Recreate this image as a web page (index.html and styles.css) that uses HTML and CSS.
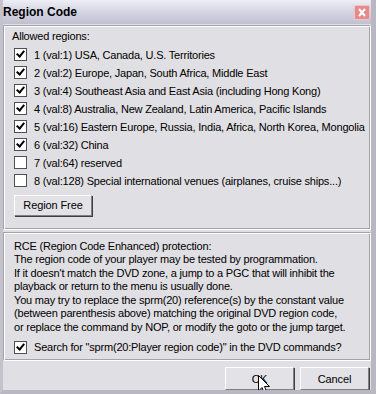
FILE: index.html
```html
<!DOCTYPE html>
<html lang="en">
<head>
    <meta charset="UTF-8">
    <title>Region Code</title>
    <link rel="stylesheet" href="styles.css">
</head>
<body>

    <div class="window">
        <div class="titlebar">
            <span class="title">Region Code</span>
            <span class="close">
                <svg width="14" height="13" viewBox="0 0 14 13">
                    <path d="M4 3 L10 10 M10 3 L4 10" stroke="#fff" stroke-width="2" fill="none"/>
                </svg>
            </span>
        </div>

        <div class="panel regions">
            <div class="label">Allowed regions:</div>
            <div class="row"><span class="check on"></span>1 (val:1) USA, Canada, U.S. Territories</div>
            <div class="row"><span class="check on"></span>2 (val:2) Europe, Japan, South Africa, Middle East</div>
            <div class="row"><span class="check on"></span>3 (val:4) Southeast Asia and East Asia (including Hong Kong)</div>
            <div class="row"><span class="check on"></span>4 (val:8) Australia, New Zealand, Latin America, Pacific Islands</div>
            <div class="row"><span class="check on"></span>5 (val:16) Eastern Europe, Russia, India, Africa, North Korea, Mongolia</div>
            <div class="row"><span class="check on"></span>6 (val:32) China</div>
            <div class="row"><span class="check"></span>7 (val:64) reserved</div>
            <div class="row"><span class="check"></span>8 (val:128) Special international venues (airplanes, cruise ships...)</div>
            <button class="btn free">Region Free</button>
        </div>

        <div class="panel rce">
            <p class="info">
                RCE (Region Code Enhanced) protection:<br>
                The region code of your player may be tested by programmation.<br>
                If it doesn't match the DVD zone, a jump to a PGC that will inhibit the<br>
                playback or return to the menu is usually done.<br>
                You may try to replace the sprm(20) reference(s) by the constant value<br>
                (between parenthesis above) matching the original DVD region code,<br>
                or replace the command by NOP, or modify the goto or the jump target.
            </p>
            <div class="row"><span class="check on"></span>Search for "sprm(20:Player region code)" in the DVD commands?</div>
        </div>

        <div class="actions">
            <button class="btn">OK</button>
            <button class="btn">Cancel</button>
        </div>

        <svg class="cursor" width="13" height="20" viewBox="0 0 13 20">
            <path d="M0.5 0.5 L0.5 16 L4 12.5 L6.5 18.5 L9 17.5 L6.5 11.5 L11.5 11.5 Z" fill="#fff" stroke="#000" stroke-width="1"/>
        </svg>
    </div>

</body>
</html>
```

FILE: styles.css
```css
body {
    margin: 0;
    font-family: "Liberation Sans", Arial, sans-serif;
    font-size: 11px;
    letter-spacing: -0.2px;
    color: #000;
    background: #e0dfe3;
}

.window {
    position: relative;
    width: 376px;
    height: 394px;
    box-sizing: border-box;
    background: #e0dfe3;
    border-left: 3px solid #c4c3cb;
    border-right: 5px solid #b9b8c2;
    border-bottom: 4px solid #b9b8c2;
    display: flex;
    flex-direction: column;
    overflow: hidden;
}

.titlebar {
    height: 24px;
    margin: 0 -5px 0 -3px;
    padding: 0 6px 0 3px;
    display: flex;
    align-items: center;
    justify-content: space-between;
    background: linear-gradient(#eeeef6, #d6d6e4 45%, #c0c0d2);
}

.title {
    font-weight: bold;
    font-size: 12px;
    letter-spacing: 0;
    margin-top: 1px;
}

.close {
    width: 14px;
    height: 13px;
    background: #e48c8c;
    border: 1px solid #f2c4c4;
    border-radius: 2px;
    display: flex;
    margin-top: 2px;
}

.panel {
    margin: 1px 0 0 0;
    border: 1px solid;
    border-color: #a4a3a9 #ffffff #ffffff #a4a3a9;
    box-shadow: inset 1px 1px 0 #fff, inset -1px -1px 0 #a4a3a9;
}

.regions {
    padding: 3px 8px 5px 8px;
    height: 198px;
}

.label {
    height: 14px;
    line-height: 14px;
    margin-bottom: 3px;
}

.row {
    height: 18px;
    display: flex;
    align-items: center;
    white-space: nowrap;
}

.check {
    width: 11px;
    height: 11px;
    border: 1px solid #4f4f55;
    background: #fff;
    margin: 0 7px 0 2px;
    flex-shrink: 0;
    position: relative;
}

.check.on::after {
    content: "";
    position: absolute;
    left: 3px;
    top: 0px;
    width: 3px;
    height: 6px;
    border: solid #000;
    border-width: 0 2px 2px 0;
    transform: rotate(40deg);
}

.btn {
    font-family: "Liberation Sans", Arial, sans-serif;
    font-size: 11px;
    letter-spacing: -0.1px;
    background: #e3e2e7;
    border: 1px solid;
    border-color: #fff #808080 #808080 #fff;
    box-shadow: 1px 1px 0 #404040;
    padding: 0;
    color: #000;
}

.free {
    width: 78px;
    height: 21px;
    margin-top: 5px;
    margin-left: 2px;
}

.rce {
    margin-top: 2px;
    padding: 7px 8px 2px 8px;
    height: 120px;
}

.info {
    margin: 0 0 4px 2px;
    line-height: 13.5px;
}

.actions {
    display: flex;
    justify-content: flex-end;
    gap: 6px;
    margin-top: 6px;
    padding-right: 2px;
}

.actions .btn {
    width: 69px;
    height: 23px;
}

.cursor {
    position: absolute;
    left: 255px;
    top: 375px;
}
```
